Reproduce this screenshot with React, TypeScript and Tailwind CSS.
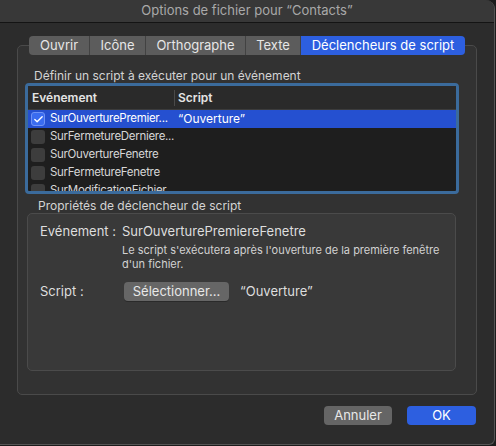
import { Check } from 'lucide-react';

const tabs = [
    { label: 'Ouvrir', w: 'w-[61px]' },
    { label: 'Icône', w: 'w-[56px]' },
    { label: 'Orthographe', w: 'w-[100px]' },
    { label: 'Texte', w: 'w-[55px]' },
];

const rows = [
    { name: 'SurOuverturePremier...', script: '“Ouverture”', on: true },
    { name: 'SurFermetureDerniere...', script: '', on: false },
    { name: 'SurOuvertureFenetre', script: '', on: false },
    { name: 'SurFermetureFenetre', script: '', on: false },
    { name: 'SurModificationFichier', script: '', on: false },
];

export default function App() {
    return (
        <div className="w-[496px] h-[446px] bg-[#1c1c1c] font-['Inter','Liberation_Sans',sans-serif]">
            <div className="w-[495px] h-[445px] flex flex-col bg-[#2c2c2c] border-r border-b border-[#555] rounded-tr-[9px] rounded-br-[6px] overflow-hidden">
                {/* title bar */}
                <div className="h-[23px] shrink-0 flex items-center justify-center bg-[#383838] border-b border-[#141414] text-[13px] text-[#a9a9a9]">
                    Options de fichier pour “Contacts”
                </div>

                {/* tabs */}
                <div className="flex justify-center pt-[13px] relative z-10">
                    <div className="flex h-[19px] rounded-[4px] overflow-hidden text-[13px] text-[#e6e6e6]">
                        {tabs.map((t) => (
                            <div
                                key={t.label}
                                className={`${t.w} flex items-center justify-center bg-[#5c5c5c] border-r border-[#424242]`}
                            >
                                {t.label}
                            </div>
                        ))}
                        <div className="w-[164px] flex items-center justify-center bg-[#2d5fe0] text-white">
                            Déclencheurs de script
                        </div>
                    </div>
                </div>

                {/* tab box */}
                <div className="mx-[17px] -mt-[10px] h-[350px] border border-[#4a4a4a] rounded-[5px] bg-[#323232] flex flex-col">
                    <div className="pt-[22px] pl-[16px] text-[12px] leading-[15px] text-[#d4d4d4]">
                        Définir un script à exécuter pour un événement
                    </div>

                    {/* table */}
                    <div className="ml-[7px] w-[434px] h-[111px] border-[3px] border-[#3b6b9c] rounded-[4px] bg-[#1e1e1e] overflow-hidden text-[12px]">
                        <div className="h-[24px] flex items-center bg-[#2a2a2a] border-b border-[#3c3c3c] font-semibold text-[#e4e4e4]">
                            <div className="w-[147px] pl-[4px] border-r border-[#4a4a4a] h-[16px] flex items-center">Evénement</div>
                            <div className="pl-[3px]">Script</div>
                        </div>
                        {rows.map((r) => (
                            <div
                                key={r.name}
                                className={`h-[18px] shrink-0 flex items-center ${r.on ? 'bg-[#2550d0] text-white' : 'text-[#d6d6d6]'}`}
                            >
                                <div className="w-[147px] flex items-center pl-[3px] gap-[5px] whitespace-nowrap">
                                    {r.on ? (
                                        <span className="w-[14px] h-[14px] shrink-0 rounded-[3px] bg-[#3a6cf0] border border-[#6f93f5] flex items-center justify-center">
                                            <Check size={11} strokeWidth={3} color="#ffffff" />
                                        </span>
                                    ) : (
                                        <span className="w-[14px] h-[14px] shrink-0 rounded-[3px] bg-[#3d3d3d]" />
                                    )}
                                    <span className="text-[11.5px] tracking-[-0.3px]">{r.name}</span>
                                </div>
                                <div className="pl-[3px]">{r.script}</div>
                            </div>
                        ))}
                    </div>

                    <div className="mt-[5px] pl-[20px] text-[12px] leading-[14px] text-[#d4d4d4]">
                        Propriétés de déclencheur de script
                    </div>

                    {/* properties group */}
                    <div className="ml-[9px] w-[429px] h-[158px] border border-[#4b4b4b] rounded-[5px] bg-[#393939] pt-[9px] pl-[12px] text-[#dedede]">
                        <div className="flex text-[13px] leading-[16px]">
                            <div className="w-[82px]">Evénement :</div>
                            <div>SurOuverturePremiereFenetre</div>
                        </div>
                        <div className="ml-[82px] mt-[4px] w-[330px] text-[11px] leading-[14px] text-[#d2d2d2]">
                            Le script s'exécutera après l'ouverture de la première fenêtre d'un fichier.
                        </div>
                        <div className="flex items-center mt-[11px] text-[13px]">
                            <div className="w-[84px]">Script :</div>
                            <div className="w-[105px] h-[19px] rounded-[4px] bg-[#666666] flex items-center justify-center text-[#e8e8e8] shadow-[0_1px_0_#2a2a2a]">
                                Sélectionner...
                            </div>
                            <div className="ml-[11px]">“Ouverture”</div>
                        </div>
                    </div>
                </div>

                {/* buttons */}
                <div className="flex justify-end gap-[15px] mt-[11px] pr-[18px] text-[13px]">
                    <div className="w-[68px] h-[19px] rounded-[4px] bg-[#656565] flex items-center justify-center text-[#e8e8e8]">
                        Annuler
                    </div>
                    <div className="w-[69px] h-[19px] rounded-[4px] bg-[#2d5fe0] flex items-center justify-center text-white">
                        OK
                    </div>
                </div>
            </div>
        </div>
    );
}
